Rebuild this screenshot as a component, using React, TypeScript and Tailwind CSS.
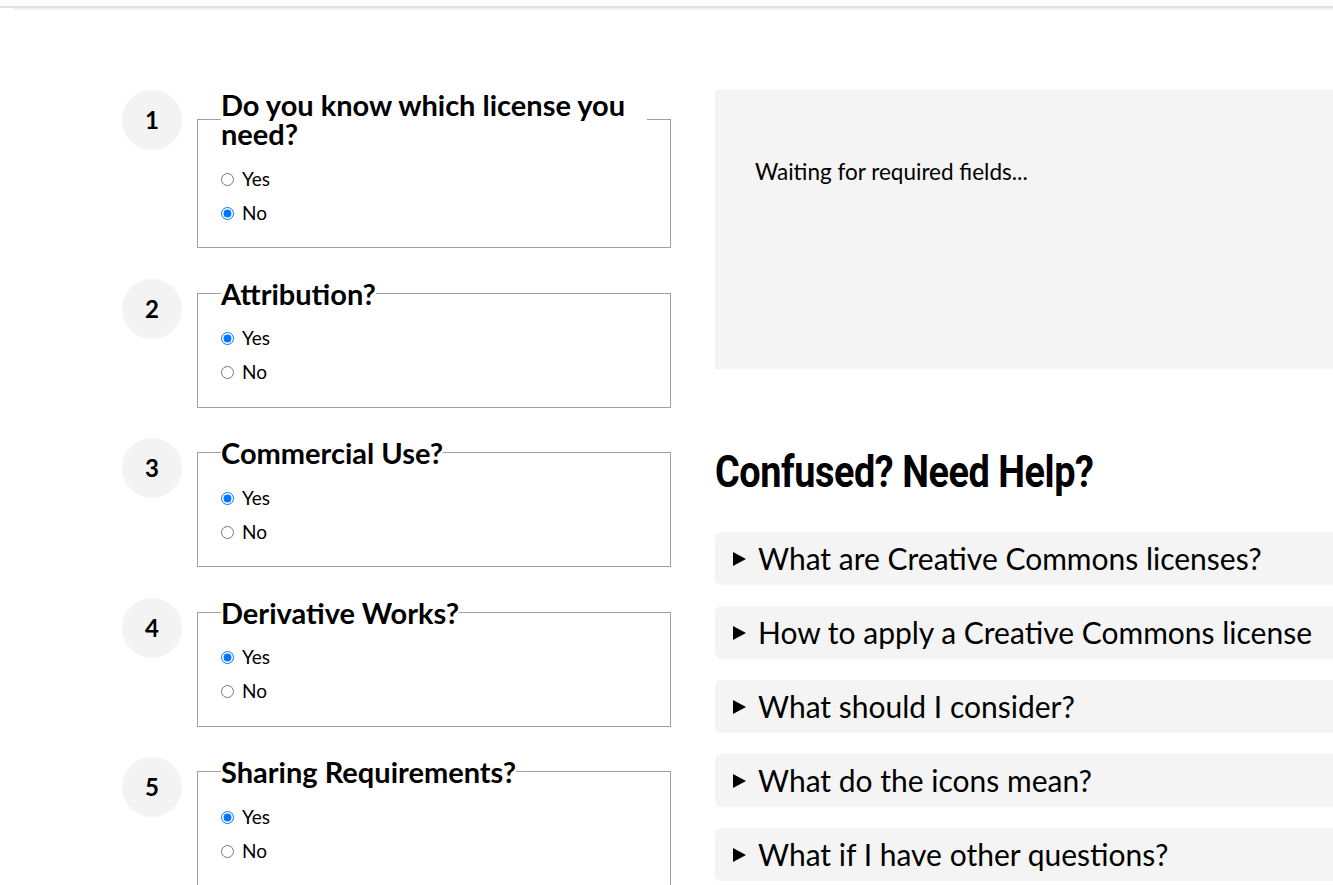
import { useState } from "react";

type Question = {
  id: string;
  title: string;
  answer: "yes" | "no";
};

const questions: Question[] = [
  { id: "know", title: "Do you know which license you need?", answer: "no" },
  { id: "attribution", title: "Attribution?", answer: "yes" },
  { id: "commercial", title: "Commercial Use?", answer: "yes" },
  { id: "derivatives", title: "Derivative Works?", answer: "yes" },
  { id: "sharing", title: "Sharing Requirements?", answer: "yes" },
];

const helpItems = [
  "What are Creative Commons licenses?",
  "How to apply a Creative Commons license",
  "What should I consider?",
  "What do the icons mean?",
  "What if I have other questions?",
];

function StepRow({ index, question }: { index: number; question: Question }) {
  const [value, setValue] = useState(question.answer);

  return (
    <div className="flex gap-[15px]">
      <div className="flex h-[60px] w-[60px] shrink-0 items-center justify-center rounded-full bg-[#f3f3f3] text-[24px] font-bold">
        {index}
      </div>
      <fieldset className="w-[474px] border border-[#a0a0a0] px-[23px] pb-[17px]">
        <legend className="text-[29px] font-bold leading-[29px]">{question.title}</legend>
        <div className="mt-[14px] flex flex-col">
          {(["yes", "no"] as const).map((opt) => (
            <label key={opt} className="flex h-[34px] items-center gap-2 text-[19px]">
              <input
                type="radio"
                name={question.id}
                checked={value === opt}
                onChange={() => setValue(opt)}
              />
              {opt === "yes" ? "Yes" : "No"}
            </label>
          ))}
        </div>
      </fieldset>
    </div>
  );
}

export default function App() {
  return (
    <div className="min-h-screen overflow-hidden bg-white font-['Lato',sans-serif] text-black">
      {/* header shadow line */}
      <div className="pt-[6px]">
        <div className="h-[2px] bg-[#e1e1e1]" />
        <div className="ml-[13px] h-[2px] bg-[#f1f1f1]" />
      </div>

      <div className="flex pl-[122px] pt-[80px]">
        <div className="flex w-[549px] shrink-0 flex-col gap-[30.5px]">
          {questions.map((q, i) => (
            <StepRow key={q.id} index={i + 1} question={q} />
          ))}
        </div>

        <div className="ml-[44px] w-[700px] shrink-0">
          <div className="h-[279px] bg-[#f4f4f4] pl-[40px] pt-[67px] text-[22.5px] leading-[30px]">
            Waiting for required fields...
          </div>

          <h2 className="mt-[78px] font-['Roboto',sans-serif] text-[44px] font-bold leading-[50px] tracking-[-0.5px]">
            <span className="inline-block origin-left scale-x-[0.86]">Confused? Need Help?</span>
          </h2>

          <div className="mt-[35px] flex flex-col gap-[21px]">
            {helpItems.map((item) => (
              <details key={item} className="rounded-md bg-[#f4f4f4]">
                <summary className="flex cursor-pointer list-none items-center py-2 pl-[18px] text-[30px] leading-[37px] [&::-webkit-details-marker]:hidden">
                  <svg width="13" height="14" viewBox="0 0 13 14" className="mr-[12px] shrink-0">
                    <path d="M0 0 L13 7 L0 14 Z" fill="#000" />
                  </svg>
                  {item}
                </summary>
              </details>
            ))}
          </div>
        </div>
      </div>
    </div>
  );
}
